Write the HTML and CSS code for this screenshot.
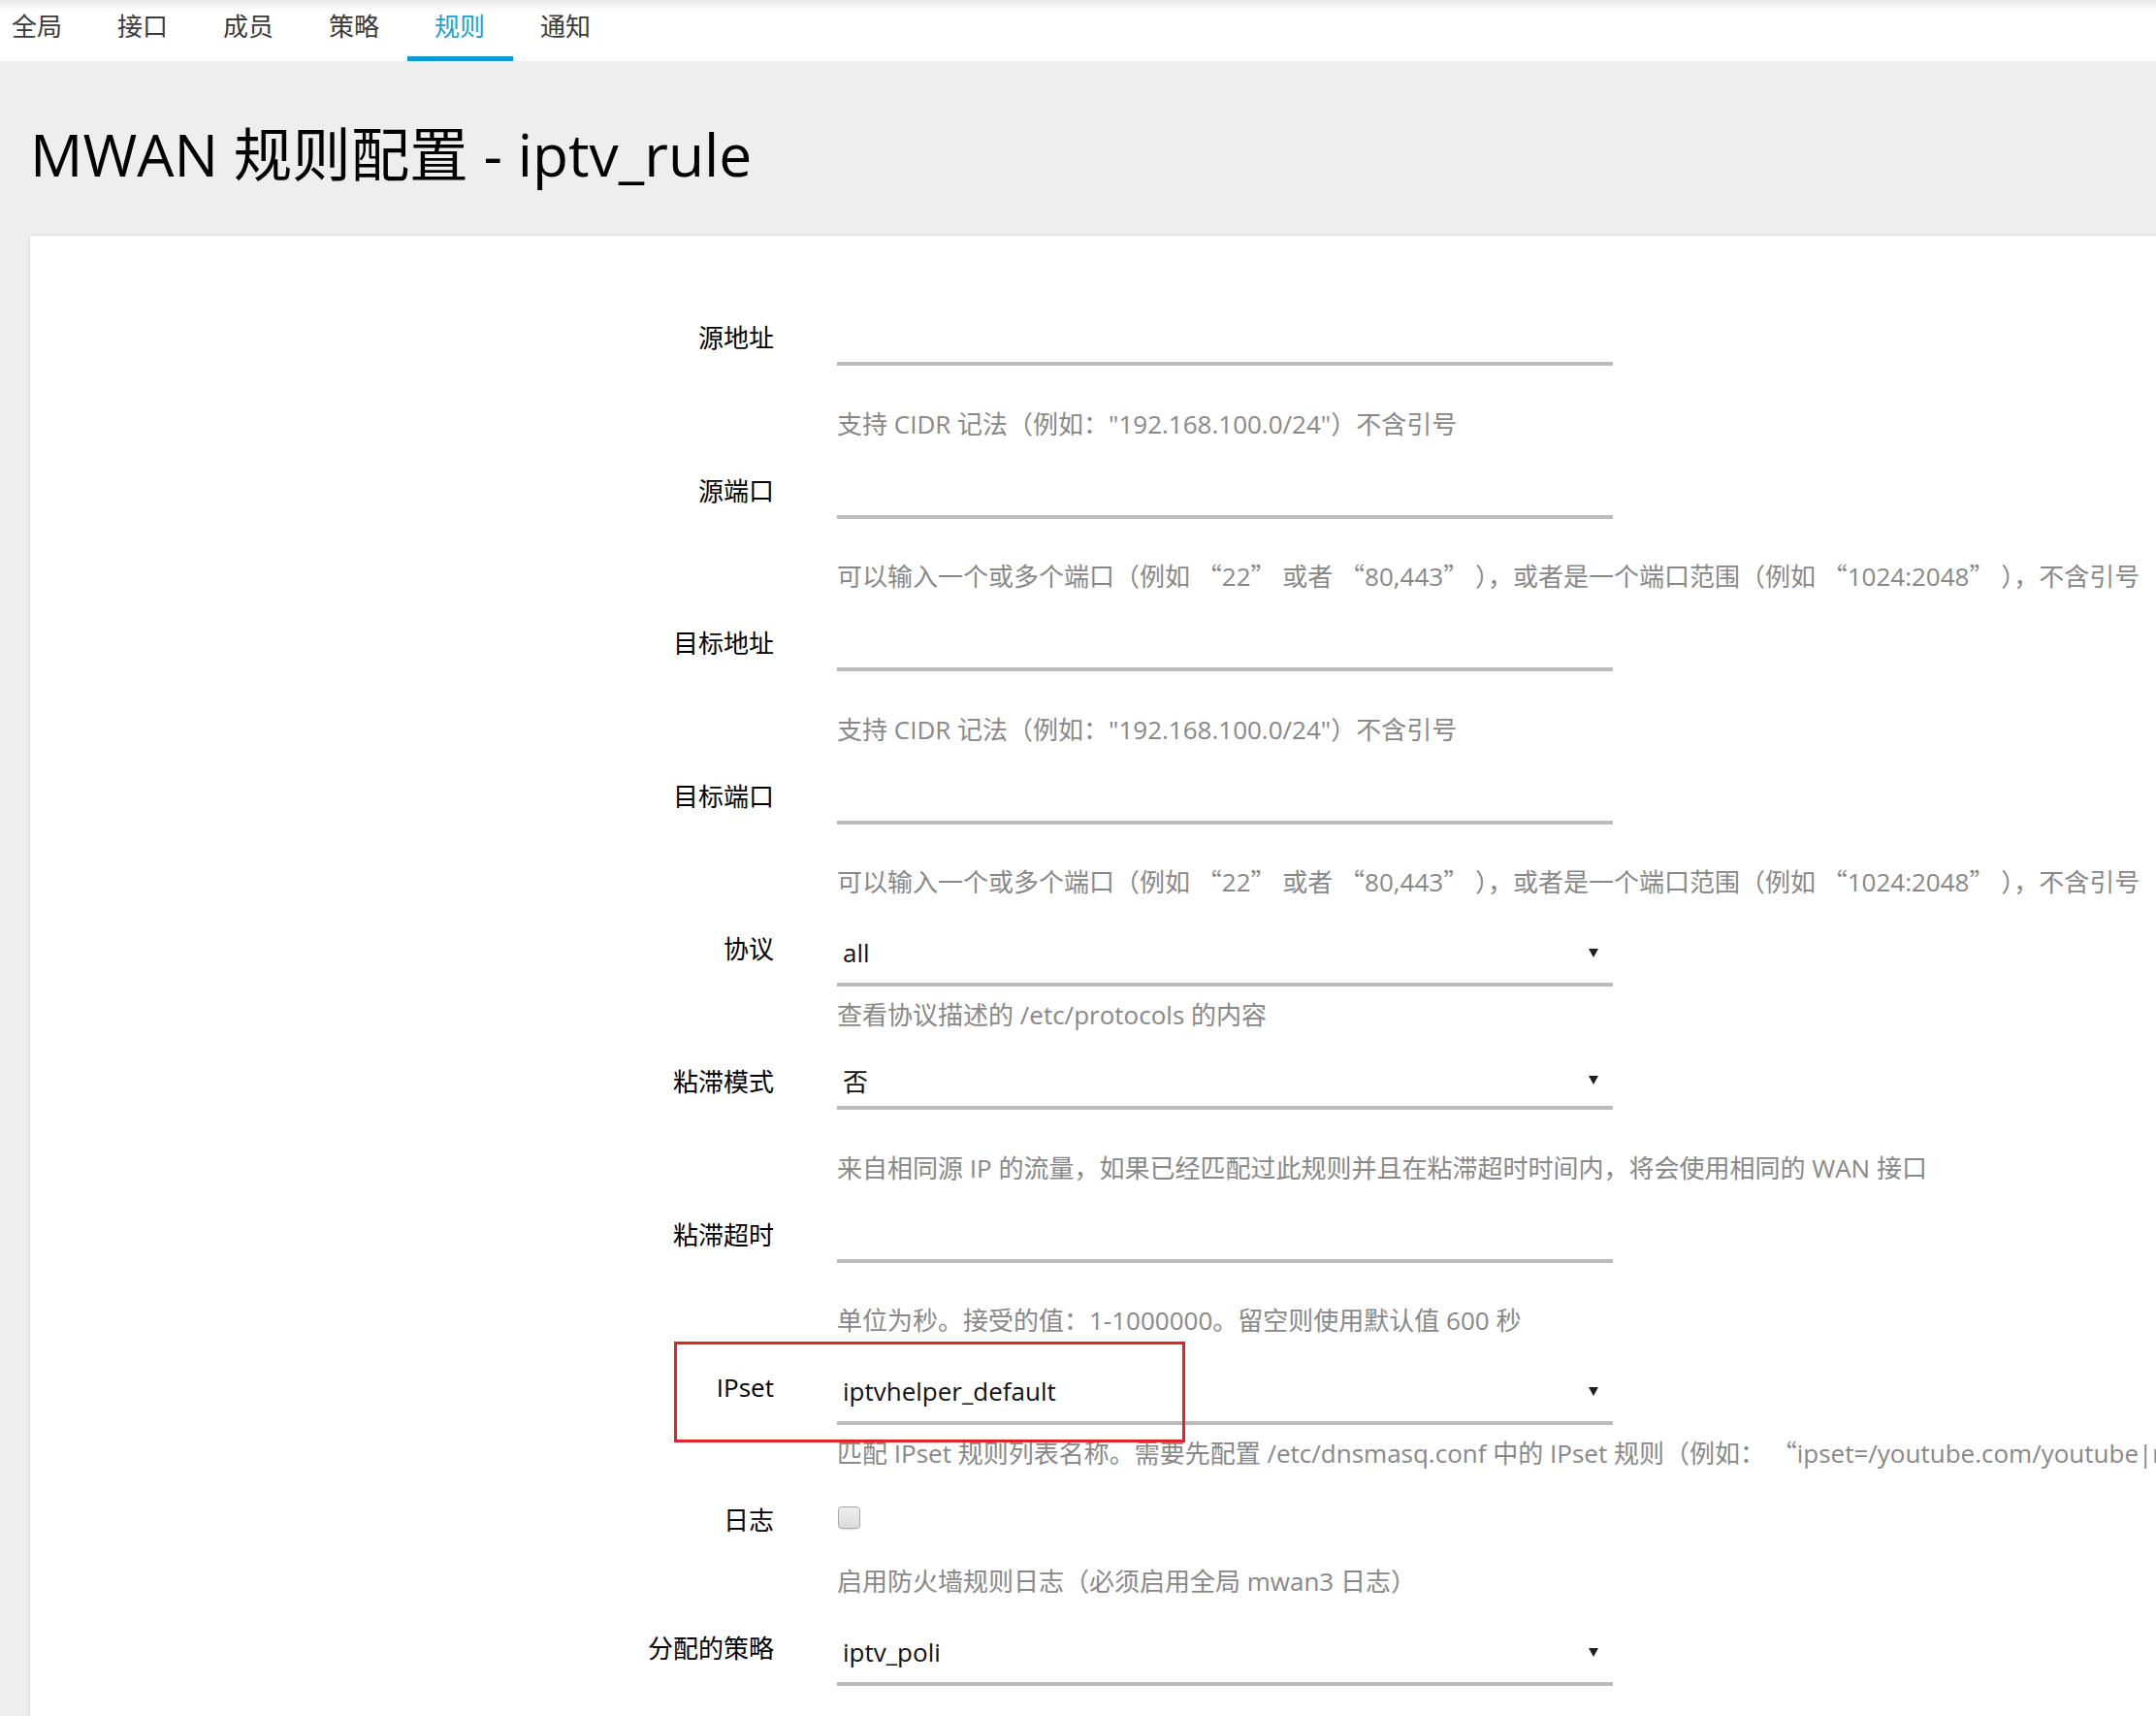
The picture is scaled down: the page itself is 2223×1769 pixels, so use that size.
FILE: index.html
```html
<!DOCTYPE html>
<html lang="zh-CN">
<head>
<meta charset="utf-8">
<title>MWAN 规则配置 - iptv_rule</title>
<link rel="stylesheet" href="styles.css">
</head>
<body>
<nav class="tabs">
  <ul class="tab-list">
    <li class="tab">全局</li>
    <li class="tab">接口</li>
    <li class="tab">成员</li>
    <li class="tab">策略</li>
    <li class="tab active">规则</li>
    <li class="tab">通知</li>
  </ul>
</nav>
<main class="content">
  <h1 class="page-title">MWAN 规则配置 - iptv_rule</h1>
  <section class="card">
    <div class="row row-a">
      <label class="row-label">源地址</label>
      <div class="row-field">
        <div class="control control-a"></div>
        <div class="desc">支持 CIDR 记法（例如："192.168.100.0/24"）不含引号</div>
      </div>
    </div>
    <div class="row row-a">
      <label class="row-label">源端口</label>
      <div class="row-field">
        <div class="control control-a"></div>
        <div class="desc">可以输入一个或多个端口（例如 <span class="q">“</span>22<span class="q">”</span> 或者 <span class="q">“</span>80,443<span class="q">”</span> ），或者是一个端口范围（例如 <span class="q">“</span>1024:2048<span class="q">”</span> ），不含引号</div>
      </div>
    </div>
    <div class="row row-a">
      <label class="row-label">目标地址</label>
      <div class="row-field">
        <div class="control control-a"></div>
        <div class="desc">支持 CIDR 记法（例如："192.168.100.0/24"）不含引号</div>
      </div>
    </div>
    <div class="row row-a">
      <label class="row-label">目标端口</label>
      <div class="row-field">
        <div class="control control-a"></div>
        <div class="desc">可以输入一个或多个端口（例如 <span class="q">“</span>22<span class="q">”</span> 或者 <span class="q">“</span>80,443<span class="q">”</span> ），或者是一个端口范围（例如 <span class="q">“</span>1024:2048<span class="q">”</span> ），不含引号</div>
      </div>
    </div>
    <div class="row row-b">
      <label class="row-label">协议</label>
      <div class="row-field">
        <div class="control control-b select"><span class="value">all</span><span class="arrow"></span></div>
        <div class="desc">查看协议描述的 /etc/protocols 的内容</div>
      </div>
    </div>
    <div class="row row-a">
      <label class="row-label">粘滞模式</label>
      <div class="row-field">
        <div class="control control-a select"><span class="value">否</span><span class="arrow"></span></div>
        <div class="desc">来自相同源 IP 的流量，如果已经匹配过此规则并且在粘滞超时时间内，将会使用相同的 WAN 接口</div>
      </div>
    </div>
    <div class="row row-a">
      <label class="row-label">粘滞超时</label>
      <div class="row-field">
        <div class="control control-a"></div>
        <div class="desc">单位为秒。接受的值：1-1000000。留空则使用默认值 600 秒</div>
      </div>
    </div>
    <div class="row row-b">
      <span class="highlight-box"></span>
      <label class="row-label">IPset</label>
      <div class="row-field">
        <div class="control control-b select"><span class="value">iptvhelper_default</span><span class="arrow"></span></div>
        <div class="desc">匹配 IPset 规则列表名称。需要先配置 /etc/dnsmasq.conf 中的 IPset 规则（例如： <span class="q">“</span>ipset=/youtube.com/youtube|netflix.com/netflix<span class="q">”</span>）</div>
      </div>
    </div>
    <div class="row row-c">
      <label class="row-label">日志</label>
      <div class="row-field">
        <div class="check-wrap"><input type="checkbox" class="checkbox"></div>
        <div class="desc">启用防火墙规则日志（必须启用全局 mwan3 日志）</div>
      </div>
    </div>
    <div class="row row-b">
      <label class="row-label">分配的策略</label>
      <div class="row-field">
        <div class="control control-b select"><span class="value">iptv_poli</span><span class="arrow"></span></div>
      </div>
    </div>
  </section>
</main>
</body>
</html>
```
FILE: styles.css
```css
html, body {
  margin: 0;
  padding: 0;
  overflow: hidden;
}
body {
  width: 2223px;
  height: 1769px;
  background: #eeeeee;
  font-family: "Open Sans", "Noto Sans CJK SC", sans-serif;
  color: #000;
}
.tabs {
  height: 63px;
  background: linear-gradient(#e9e9e9, #ffffff 12px);
}
.tab-list {
  display: flex;
  list-style: none;
  margin: 0 0 0 -16.5px;
  padding: 0;
}
.tab {
  padding: 0 28.5px 4px;
  line-height: 54px;
  font-size: 26px;
  color: #3a3a3a;
  border-bottom: 5px solid transparent;
}
.tab.active {
  color: #1d9fd6;
  border-bottom-color: #0a9bd0;
}
.page-title {
  margin: 0;
  padding: 56px 0 44px 31px;
  font-size: 60.5px;
  font-weight: 400;
  line-height: 80px;
  color: #000;
}
.card {
  background: #fff;
  margin: 0 -80px 0 31px;
  padding-top: 85px;
  min-height: 1600px;
  box-shadow: 0 0 3px rgba(0, 0, 0, 0.14);
}
.row {
  display: flex;
  align-items: flex-start;
  margin-bottom: 29px;
  position: relative;
}
.row-label {
  width: 767px;
  flex: none;
  text-align: right;
  font-size: 26px;
  line-height: 40px;
  color: #000;
}
.row-field {
  margin-left: 65px;
  width: 800px;
  flex: none;
}
.control {
  width: 800px;
  box-sizing: border-box;
  border-bottom: 4px solid #bbbbbb;
}
.control-a { height: 49px; }
.control-b { height: 59px; }
.select {
  display: flex;
  justify-content: space-between;
  align-items: flex-start;
  padding: 0 15px 0 6px;
  font-size: 26px;
  line-height: 40px;
  color: #111;
}
.control-b.select { padding-top: 4px; }
.arrow {
  width: 0;
  height: 0;
  border-left: 5.5px solid transparent;
  border-right: 5.5px solid transparent;
  border-top: 9px solid #1e1e1e;
  margin-top: 14px;
}
.control-b .arrow { margin-top: 15.5px; }
.desc {
  font-size: 26px;
  line-height: 40px;
  height: 40px;
  color: #888888;
  white-space: nowrap;
}
.q {
  font-family: "Noto Sans CJK SC", sans-serif;
  line-height: 1;
}
.row-a .desc { margin-top: 39.5px; }
.row-b .desc { margin-top: 9px; }
.row-c .desc { margin-top: 17px; }
.check-wrap { height: 40px; }
.checkbox {
  appearance: none;
  -webkit-appearance: none;
  display: block;
  margin: 6px 0 0 1px;
  width: 23px;
  height: 23px;
  box-sizing: border-box;
  border: 1.5px solid #a9a9a9;
  border-radius: 4px;
  background: linear-gradient(#efefef, #dcdcdc);
  box-shadow: 0 1px 1px rgba(0, 0, 0, 0.12);
}
.highlight-box {
  position: absolute;
  left: 664px;
  top: -27px;
  width: 527px;
  height: 104px;
  box-sizing: border-box;
  border: 3px solid #e3232b;
  pointer-events: none;
}
```
